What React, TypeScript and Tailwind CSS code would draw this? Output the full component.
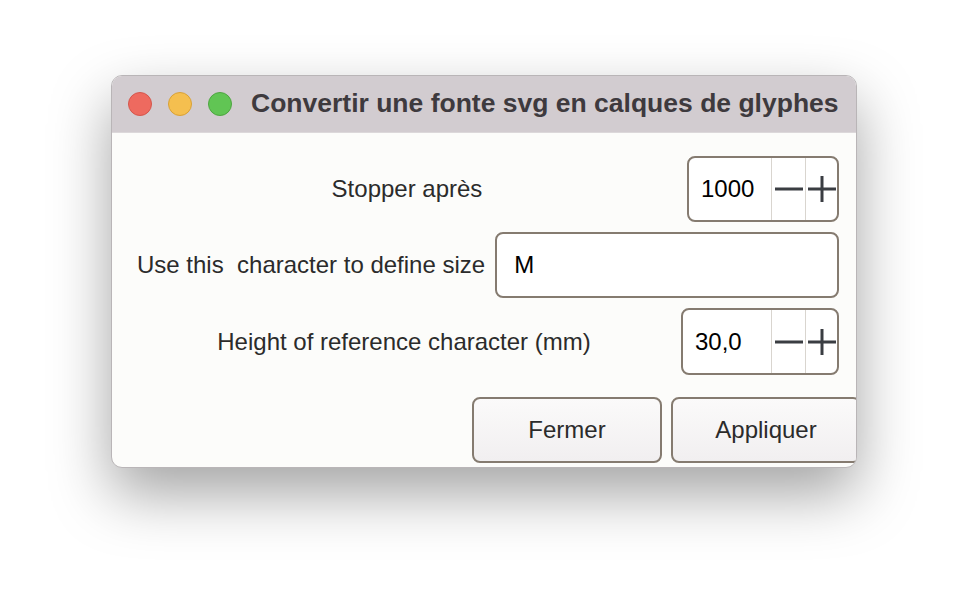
import React from "react";

const Spin = ({ value, width, height }: { value: string; width: string; height: string }) => {
  return (
    <div
      className={`${width} ${height} shrink-0 flex border-2 border-[#857b70] rounded-[8px] bg-white overflow-hidden`}
    >
      <div className="flex-1 flex items-center pl-[12px] text-[24px] text-black">{value}</div>
      <div className="w-[34px] flex items-center justify-center border-l border-[#d9d5cf]">
        <svg width="30" height="30" viewBox="0 0 30 30">
          <path d="M1 15H29" stroke="#3a3d42" strokeWidth="3" />
        </svg>
      </div>
      <div className="w-[32px] flex items-center justify-center border-l border-[#d9d5cf]">
        <svg width="30" height="30" viewBox="0 0 30 30">
          <path d="M1 15H29M15 2V28" stroke="#3a3d42" strokeWidth="3" />
        </svg>
      </div>
    </div>
  );
};

const App = () => {
  return (
    <div
      className="w-[968px] h-[616px] bg-white pt-[75px] pl-[111px]"
      style={{ fontFamily: '"Liberation Sans", Arial, sans-serif' }}
    >
      <div className="w-[746px] h-[393px] rounded-[11px] overflow-hidden border border-[#b9b5b7] bg-[#fcfcfa] shadow-[0_26px_60px_rgba(0,0,0,0.36)] flex flex-col">
        {/* title bar */}
        <div className="h-[57px] shrink-0 bg-[#d2ccd0] border-b border-[#dcd8da] flex items-center pl-[16px]">
          <div className="flex gap-[16px]">
            <span className="w-[24px] h-[24px] rounded-full bg-[#ee6a5f] border border-[#d5564c]" />
            <span className="w-[24px] h-[24px] rounded-full bg-[#f5bf4f] border border-[#d9a136]" />
            <span className="w-[24px] h-[24px] rounded-full bg-[#61c554] border border-[#4ea541]" />
          </div>
          <h1 className="ml-[19px] text-[26.5px] font-bold text-[#3e3a3e] whitespace-nowrap">
            Convertir une fonte svg en calques de glyphes
          </h1>
        </div>

        {/* form */}
        <div className="flex flex-col pt-[23px] pl-[15px] pr-[17px] text-[24px] text-[#2b2b2b]">
          <div className="flex items-center">
            <label className="flex-1 text-center">Stopper après</label>
            <Spin value="1000" width="w-[152px]" height="h-[66px]" />
          </div>
          <div className="flex items-center mt-[10px]">
            <label className="shrink-0 px-[10px] whitespace-pre">Use this  character to define size</label>
            <div className="flex-1 h-[66px] flex items-center pl-[17px] border-2 border-[#857b70] rounded-[8px] bg-white text-black">
              M
            </div>
          </div>
          <div className="flex items-center mt-[10px]">
            <label className="flex-1 text-center">Height of reference character (mm)</label>
            <Spin value="30,0" width="w-[158px]" height="h-[67px]" />
          </div>
        </div>

        <div className="flex gap-[9px] pl-[360px] mt-[22px]">
          <button className="w-[190px] h-[66px] shrink-0 border-2 border-[#857b70] rounded-[8px] bg-gradient-to-b from-[#fbfafa] to-[#f1eff0] text-[24px] text-[#2b2b2b]">
            Fermer
          </button>
          <button className="w-[190px] h-[66px] shrink-0 border-2 border-[#857b70] rounded-[8px] bg-gradient-to-b from-[#fbfafa] to-[#f1eff0] text-[24px] text-[#2b2b2b]">
            Appliquer
          </button>
        </div>
      </div>
    </div>
  );
};

export default App;
